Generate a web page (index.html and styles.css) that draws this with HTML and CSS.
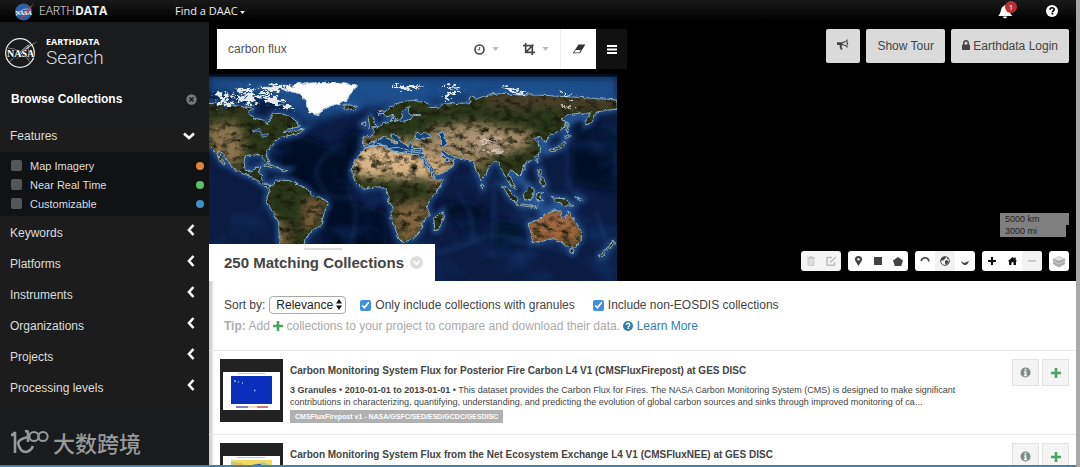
FILE: index.html
```html
<!DOCTYPE html>
<html lang="en">
<head>
  <meta charset="UTF-8">
  <meta name="viewport" content="width=device-width, initial-scale=1.0">
  <title>Earthdata Search</title>
  <link rel="stylesheet" href="styles.css">
</head>
<body>
  <!-- shared icons -->
  <svg class="defs" width="0" height="0">
    <symbol id="left" viewBox="0 0 8 12"><path d="M6.500 1 2 6l4.500 5" fill="none" stroke="currentColor" stroke-width="2.600"/></symbol>
    <symbol id="down" viewBox="0 0 12 8"><path d="M1 1.500 6 6l5-4.500" fill="none" stroke="currentColor" stroke-width="2.600"/></symbol>
    <symbol id="caret" viewBox="0 0 8 5"><path d="M0 0h8L4 5z" fill="currentColor"/></symbol>
    <symbol id="plus" viewBox="0 0 10 10"><path d="M3.700 0h2.600v3.700H10v2.600H6.300V10H3.700V6.300H0V3.700h3.700z" fill="currentColor"/></symbol>
    <symbol id="info" viewBox="0 0 12 12"><circle cx="6" cy="6" r="5.500" fill="currentColor"/><path d="M5 2h2v1.700H5zM4.300 4.700H7v3.800h.8V10H4.200V8.500H5V6h-.7z" fill="#f4f4f4"/></symbol>
    <symbol id="help" viewBox="0 0 12 12"><circle cx="6" cy="6" r="6" fill="currentColor"/><path d="M4 4.700c0-2.800 4.200-2.500 4.200-.2 0 1.400-1.800 1.300-1.800 2.900M5.500 8.700h1.800" fill="none" stroke="var(--mark)" stroke-width="1.600"/></symbol>
  </svg>

  <div class="app">
    <header class="topbar">
      <a class="brand" href="#">
        <svg width="20" height="19" viewBox="0 0 20 19"><circle cx="9.500" cy="10" r="8.500" fill="#2c5fa5"/><path d="M2 14Q9 4 17 8" fill="none" stroke="#9db8dc"/><path d="M20 1 10 11 6 17l7-5z" fill="#c8413e"/><text class="nasa" x="1.500" y="12.500" fill="#fff">NASA</text></svg>
        <span>EARTH<b>DATA</b></span>
      </a>
      <a class="daac" href="#">Find a DAAC <svg width="5" height="3"><use href="#caret"/></svg></a>
      <div class="alerts">
        <button class="plain bell" aria-label="Notifications">
          <svg width="15" height="15" viewBox="0 0 15 15"><path d="M7 1c-.7 0-.8.7-.8 1C2 3 4 8 .5 11.500V12H14v-.5C10.500 8 12 3 8 2c0-.3-.2-1-1-1zM5 12.600c0 2.400 4 2.400 4 0z" fill="#fff"/></svg>
          <span class="badge">1</span>
        </button>
        <button class="plain" aria-label="Help"><svg class="helpicon" width="12" height="12"><use href="#help"/></svg></button>
      </div>
    </header>

    <div class="main">
      <nav class="sidebar">
        <a class="logo" href="#">
          <svg width="36" height="34" viewBox="0 0 36 34"><g fill="none" stroke="#e8e8e8"><circle cx="16" cy="18" r="14.300" stroke-width="1.300"/><path d="M5 27 27 8M4 13q12 0 22 14M11 21 24 10l1 14" stroke-width=".8" opacity=".6"/></g><path d="M34 6Q19 13 12 25q9-11 22-19z" fill="#eee"/><text class="nasa-big" x="3" y="22">NASA</text></svg>
          <span><b>EARTHDATA</b><i>Search</i></span>
        </a>
        <div class="browse"><h2>Browse Collections</h2>
          <button class="plain" aria-label="Close"><svg width="11" height="11" viewBox="0 0 11 11"><circle cx="5.500" cy="5.500" r="5.200" fill="#777"/><path d="m3.500 3.500 4 4m0-4-4 4" stroke="#1b1c1d" stroke-width="1.600"/></svg></button>
        </div>
        <button class="facet"><span>Features</span><svg width="12" height="8"><use href="#down"/></svg></button>
        <div class="features">
          <label><input type="checkbox">Map Imagery<span class="dot orange"></span></label>
          <label><input type="checkbox">Near Real Time<span class="dot green"></span></label>
          <label><input type="checkbox">Customizable<span class="dot blue"></span></label>
        </div>
        <button class="facet closed"><span>Keywords</span><svg width="8" height="12"><use href="#left"/></svg></button>
        <button class="facet closed"><span>Platforms</span><svg width="8" height="12"><use href="#left"/></svg></button>
        <button class="facet closed"><span>Instruments</span><svg width="8" height="12"><use href="#left"/></svg></button>
        <button class="facet closed"><span>Organizations</span><svg width="8" height="12"><use href="#left"/></svg></button>
        <button class="facet closed"><span>Projects</span><svg width="8" height="12"><use href="#left"/></svg></button>
        <button class="facet closed"><span>Processing levels</span><svg width="8" height="12"><use href="#left"/></svg></button>
        <div class="watermark">
          <svg width="39" height="26" viewBox="0 0 39 26"><g fill="none" stroke="currentColor" stroke-width="2.600"><path d="M1 6q3 0 4-3v21M18 8Q9 10 8 14q2 9 8 9 5-1 7-6"/><path d="M15 2.500q3-1 3 1V13"/><circle cx="24" cy="7.500" r="4.600" stroke-width="2"/><circle cx="33" cy="7.500" r="4.600" stroke-width="2"/></g></svg>
          <span>大数跨境</span>
        </div>
      </nav>

      <div class="content">
        <section class="map-area">
          <div class="map-top">
            <form class="search">
              <input type="text" value="carbon flux" aria-label="Search">
              <button type="button" class="plain pick" aria-label="Temporal"><svg width="11" height="11" viewBox="0 0 11 11"><circle cx="5.500" cy="5.500" r="4.500" fill="none" stroke="#444" stroke-width="1.600"/><path d="M5.700 2.800v3H3.600" fill="none" stroke="#444"/></svg><svg class="caret" width="7" height="4"><use href="#caret"/></svg></button>
              <button type="button" class="plain pick" aria-label="Spatial"><svg width="12" height="12" viewBox="0 0 12 12"><path d="M2.700 0v9.300H12M0 2.700h9.300V12M3 9l7.500-7.500" fill="none" stroke="#444" stroke-width="1.700"/></svg><svg class="caret" width="7" height="4"><use href="#caret"/></svg></button>
              <button type="reset" class="plain clear" aria-label="Clear"><svg width="14" height="10" viewBox="0 0 14 10"><path d="M6.500.5h6.800L8 9.300H.8z" fill="#333"/><path d="M3.700 5.900h5L7.400 8.400H2.200z" fill="#fff"/></svg></button>
              <button type="button" class="plain menu" aria-label="Menu"><svg width="10" height="9" viewBox="0 0 10 9"><path d="M0 1h10M0 4.500h10M0 8h10" stroke="#fff" stroke-width="1.800"/></svg></button>
            </form>
            <div class="actions">
              <button class="btn" aria-label="Feedback"><svg width="12" height="11" viewBox="0 0 12 11"><path d="M0 3.300h5Q8.500 3 10.500 0v3.400q1.600.6 0 2.200V9Q8.500 6.500 5 6q-1 2 .7 4.200L4 11Q2.500 9 2.600 6H0z" fill="#444"/><path d="M5.800 4.100Q8 3.800 9.600 2v5Q8 5.400 5.800 5.200z" fill="#dadada"/></svg></button>
              <button class="btn">Show Tour</button>
              <button class="btn"><svg width="8" height="10" viewBox="0 0 8 10"><path d="M1.800 5V3c0-3 4.400-3 4.400 0v2" fill="none" stroke="#444" stroke-width="1.500"/><rect y="4.500" width="8" height="5.500" rx=".8" fill="#444"/></svg> Earthdata Login</button>
            </div>
          </div>

          <div class="map-row">
            <svg class="world" viewBox="0 6 1224 621" preserveAspectRatio="none" role="img" aria-label="World map">
              <defs>
                <filter id="b8" x="-30%" y="-30%" width="160%" height="160%"><feGaussianBlur stdDeviation="8"/></filter>
                <filter id="b20" x="-50%" y="-50%" width="200%" height="200%"><feGaussianBlur stdDeviation="14"/></filter>
                <filter id="rough" x="-2%" y="-2%" width="104%" height="104%" color-interpolation-filters="sRGB"><feTurbulence type="fractalNoise" baseFrequency=".07" numOctaves="3" seed="4" result="n"/><feDisplacementMap in="SourceGraphic" in2="n" scale="13" xChannelSelector="R" yChannelSelector="G"/></filter>
                <filter id="ice" x="-2%" y="-2%" width="104%" height="104%" color-interpolation-filters="sRGB"><feTurbulence type="fractalNoise" baseFrequency=".06 .1" numOctaves="3" seed="8" result="n"/><feDisplacementMap in="SourceGraphic" in2="n" scale="44" xChannelSelector="R" yChannelSelector="G"/></filter>
                <filter id="grain" x="0" y="0" width="100%" height="100%" color-interpolation-filters="sRGB"><feTurbulence type="fractalNoise" baseFrequency=".035 .06" numOctaves="4" seed="3"/><feColorMatrix values="0 0 0 0 .1  0 0 0 0 .1  0 0 0 0 .04  2.600 0 0 0 -1.150"/></filter>
                <filter id="sea" x="0" y="0" width="100%" height="100%" color-interpolation-filters="sRGB"><feTurbulence type="fractalNoise" baseFrequency=".008 .012" numOctaves="4" seed="12"/><feColorMatrix values="0 0 0 0 .09  0 0 0 0 .24  0 0 0 0 .48  2.400 0 0 0 -1.150"/></filter>
                <g id="shapes">
                  <path d="M-9 94 60 97l45 8 28 3-15 16 12 14 34 6 12 15 9-20 5-15 25 0 26 9 25 17 6 14-37 8-13 10 24-4 40-7-14 12-32 8-25 5-20 15-20 25-3 15 8 22-8-3-10-17-22-7-30 5-5 15 3 25 22 8 15-15 11 0-8 18 13 4-3 20 13 12 17 2-12 9-20-15-25-18-35-14-25-13-16-24-14-22-17-7 27 42-12-4-24-38-20-18z"/>
                  <path d="m184 342 15-17 50 0 18 13 28 12 12 20 43 15 8 13-12 22-10 40-33 20-16 30-25 70h-50l-3-130-20-32-18-35 8-20z"/>
                  <path d="m460 226 2-31 28-2 6-13-6-10 25-10 14-10 19-2-2-14 6 0 3 12 25 2 20-4 9-12 28-3-37-4-4-10 8-10-12 1-11 12-4 18-13 10-12-17-20 5-10-10 24-20 30-14 38-5 45 10 5 12 28-2 9-9 80-3 5-18 9-1 7 10 40-15 43-5 40 5 60 0 85 5 85 5 69 5v27l-44 6-18 3-17 32-15 8 2-17 14-20-32 0-42 6-15 14 13 6-4 16-17 12-28 15-10 20-8-6-10-10-16 4 10 14 5 18-5 17-16 13-20 9-10 15-4 20-10 6-15-15-10 0-5 10 11 20 14 25-19-13-16-30-10-20-5-17-15-5-20 20-10 25-10 12-15-27-10-30-15-5-35-5-20-7-20-14-5 5 20 20 20 0-5 22-30 20-20 6-15-24-31-48-40-3-30-8-30 4-30-20-20 2z"/>
                  <path d="m465 229 18-7 48-2 10 15 29 6 58 8 22 31 26 41 30 1-16 28-25 30-10 20 5 30-20 22-5 25-20 23-35 12-10-12-15-40-10-20 5-30-10-25-5-25-10-15-30 0-30 7-25-22-12-25 4-25 18-30z"/>
                  <path d="m675 440 25-23 3 18-13 37-13 4zM478 134l8-4 15 31-22 7 5-14zM458 153l11-4 2 11-12 2zM400 103l15-5 30 5-8 9-25 0z"/>
                  <path d="m165 275 35 8 18 9-20-3-34-9zM212 293l24 0-10 6z"/>
                  <g transform="translate(603)">
                    <path d="m354 455 36-14 20-18 22-9 24 6-5 12 14 9 10-27 11 22 14 20 15 23-2 27-18 20-25-4-14-12-26-10-30 7-35 5 0-22zM480 530l14 1-6 14-8-4zM610 508l3 9-20 16-22 24-4-6 24-20z"/>
                    <path d="m278 342 14 6 32 35-5 8-18-11zM322 394l42 6 20 2-1 5-60-7zM340 368l21-25 12 14-6 24-22 3zM380 365l22-3-14 10 12 14-15-4-3 8zM383 293l10 0 0 18 14 24-4 10-14-10 2-18zM424 373l20 6 22 1 24 22-26 0-24-10zM418 234l28-10 19-18 2 6-16 18-30 9zM460 195l13-9 6 7-14 7zM468 150l6 5-2 26-5 1zM334 285l12-2-4 11zM380 264l5-5-2 15zM216 334l6 9-4 7-4-7zM495 378l22 3-5 6z"/>
                  </g>
                </g>
                <mask id="land" maskUnits="userSpaceOnUse" x="0" y="0" width="1224" height="640"><use href="#shapes" fill="#fff"/></mask>
              </defs>
              <rect y="6" width="1224" height="621" fill="#0a1c42"/>
              <g filter="url(#b20)">
                <path d="M0 15h1224v70L800 75 450 110 300 150 200 80 0 60z" fill="#1d508d"/>
                <path d="M190 240q70-80 150-20 60 10 100-60 30 80-20 150l10 80 100 30 10 200H300l60-130-70-70-90-90z" fill="#030b25"/>
                <path d="M680 400l100-20 60 40-60 70zM1090 160h130v200l-130-30z" fill="#030b25"/>
                <path d="M850 450h90l-10 90-80-20z" fill="#06122e"/>
              </g>
              <rect y="6" width="1224" height="621" filter="url(#sea)" opacity=".5"/>
              <g filter="url(#b8)" fill="none" stroke="#2b5c9e">
                <use href="#shapes" stroke-width="16" opacity=".8"/>
                <path d="M380 230q-80 50-50 100 20 60 100 45 20 60-5 150M745 360q50 60 45 140M855 330v180M690 540q90-20 160-55l250 60M1073 180l5 160 50 50M1160 420l30 80 0 90" stroke-width="8" opacity=".35"/>
                <path d="M905 290l55 60 40 70 80-30M1000 210l20 40M1075 155q35-30 65-20" stroke-width="25" opacity=".8"/>
              </g>
              <g filter="url(#rough)">
                <use href="#shapes" fill="#2b3819"/>
                <g mask="url(#land)">
                  <g filter="url(#b20)">
                    <path d="M-20 80H300v35H-20z" fill="#33301c"/>
                    <path d="M0 155l90-5 20 80-30 60-80-50z" fill="#8b7450"/>
                    <path d="M430 205H640l50 110-75 8-190-10z" fill="#d9b488"/>
                    <path d="M640 230h60l50 50-70 50-45-70z" fill="#cda77b"/>
                    <path d="M665 165l120-15 190 30-20 50-100 20-70 30-130-30z" fill="#a58c69"/>
                    <path d="M780 190l90-5 20 55-80 5z" fill="#b59e84"/>
                    <path d="M780 250h50l-5 60-20-10z" fill="#817548"/>
                    <path d="M830 60h400v50H830z" fill="#4b412b"/>
                    <path d="M290 380l60 0-30 90-40 5zM210 445l30 20 0 90-30 0z" fill="#7e6040"/>
                    <path d="M550 400l110-20-10 100-80 40z" fill="#80633f"/>
                    <path d="M660 330l40-10-20 60z" fill="#8b6845"/>
                    <path d="M950 410h165v105H950z" fill="#a0673f"/>
                  </g>
                  <path d="M190 425l15 20 10 70" stroke="#c5aa98" stroke-width="7" fill="none" filter="url(#b8)"/>
                  <rect y="60" width="1224" height="500" filter="url(#grain)"/>
                </g>
                <!-- inland seas -->
                <g fill="#164174" stroke="#8eb4cf" stroke-width="3">
                  <path d="m466 229 23-5 11-18 30-12 10 6 16 16 8-2-20-24 14-2 27 28 14 10 4-18 10 22 30-2-1 16-45-6-25 4-40-12-16-14z"/>
                  <path d="m614 192 12-12 12 6 12-5 18 14-26 4-22 5zM690 184l14-4 3 12 8 24-10 6-10-10zM637 254l8 4 33 56-4 6zM696 251l8-1 20 19-12 0z"/>
                  <path d="m130 176 22-4 10 12-20-4zM155 190l20-5 5 5-20 6z" stroke-width="2"/>
                </g>
                <use href="#shapes" fill="none" stroke="#8fb1c0" stroke-width="3"/>
                <path d="M220 49l40-14 90-4 95 8-24 31-6 15-30 12-38 10-18 21-26-5-10-22-5-20-16-16-36-7z" fill="#fff" stroke="#bcd0dc" stroke-width="3"/>
              </g>
              <g filter="url(#ice)" fill="#e4e9ec" stroke="#315b83" stroke-width="3">
                <path d="m5 65 45-5 25 12-40 12zM75 50l40-10 25 12-35 12zM10 90l50-5 20 12-45 8zM85 72l45-8 30 14-40 16-38-7zM145 48l50-12 55 3-28 14-50 10zM160 72l45-2 20 25-20 12-30-15zM215 90l25 5 14 17-20 4zM105 95l25 0 5 12-20 0z"/>
                <path d="M150 66h35l-15 9zM540 44l40-5 60 5-45 10zM700 70l38-14 25 2-30 10-22 16zM690 43l50-3 18 6-45 2zM870 42l45 8 45 18-50-6zM1050 64l50 5-20 5z" stroke="none"/>
              </g>
              <g fill="#ddd6cb" opacity=".75" filter="url(#ice)"><path d="M800 210l35-8 25 5-20 6zM820 235l50-2 20 10-40 0zM860 195l20 5-8 5zM1060 100l30 5 15 8-38-5zM500 112l20 8-5 9z"/></g>
              <rect x="0" y="6" width="1224" height="8" fill="#030814" opacity=".8"/>
            </svg>

            <div class="map-tools">
              <div class="scale"><span class="km">5000 km</span><span class="mi">3000 mi</span></div>
              <div class="tools">
                <div class="group off">
                  <button aria-label="Delete"><svg width="8" height="10" viewBox="0 0 8 10"><path d="M0 1.500h8M2.500.5h3M1 2.500h6v7H1z" stroke="#c9c9c9" fill="#ddd"/></svg></button>
                  <button aria-label="Edit"><svg width="11" height="10" viewBox="0 0 11 10"><path d="M6 1.500H1v7.700h7.500V6M4 6.500 10 1" stroke="#bbb" stroke-width="1.400" fill="none"/></svg></button>
                </div>
                <div class="group">
                  <button aria-label="Point"><svg width="7" height="10" viewBox="0 0 7 10"><path d="M3.500 0C-.8 0-.6 4 1 6l2.500 4L6 6c1.600-2 1.800-6-2.500-6z" fill="#444"/><circle cx="3.500" cy="3.300" r="1.200" fill="#fff"/></svg></button>
                  <button aria-label="Rectangle"><svg width="8" height="8"><rect width="8" height="8" fill="#444"/></svg></button>
                  <button aria-label="Polygon"><svg width="10" height="9" viewBox="0 0 10 9"><path d="M5 0l5 3.600L8.200 9H1.800L0 3.600z" fill="#444"/></svg></button>
                </div>
                <div class="group">
                  <button aria-label="North Polar"><svg width="10" height="10" viewBox="0 0 10 10"><path d="M1 5Q2 1.500 5.500 1.700 8.500 2 9 5.500" fill="none" stroke="#444" stroke-width="1.600"/></svg></button>
                  <button class="selected" aria-label="Equirectangular"><svg width="10" height="10" viewBox="0 0 10 10"><circle cx="5" cy="5" r="4.400" fill="#eee" stroke="#555"/><path d="M1 3l2-2 3 0-1 2-2 1.500L1 4.500zM5 5l2-1 2 2-3 3-1-2zM7 1l2 2H7z" fill="#444"/></svg></button>
                  <button aria-label="South Polar"><svg width="10" height="10" viewBox="0 0 10 10"><path d="M1 5l3 2 5-2Q7.500 9.300 5 9 2.300 9 1 5z" fill="#444"/></svg></button>
                </div>
                <div class="group dark">
                  <button aria-label="Zoom in"><svg width="8" height="8"><use href="#plus"/></svg></button>
                  <button aria-label="Home"><svg width="9" height="8" viewBox="0 0 9 8"><path d="M0 4 4.500 0l1.800 1.500V.5h1.500v2.400L9 4 8 4.500V8H5.500V5.300h-2V8H1V4.500z" fill="#111"/></svg></button>
                  <button class="selected" aria-label="Zoom out"><svg width="8" height="3"><rect width="8" height="2" fill="#ccc"/></svg></button>
                </div>
                <div class="group">
                  <button aria-label="Layers"><svg width="14" height="14" viewBox="0 0 14 14"><path d="M1 4.500 7 2l6 2.500V10l-6 3.500L1 10z" fill="#aaa"/><path d="M1 4.500 7 2l6 2.500L7 7z" fill="#ddd"/><path d="M1 7.200 7 10l6-2.800" fill="none" stroke="#ccc"/></svg></button>
                </div>
              </div>
            </div>
          </div>
          <div class="tab"><span class="handle"></span>
            <h1>250 Matching Collections</h1>
            <button class="plain" aria-label="Collapse"><svg width="13" height="13" viewBox="0 0 13 13"><circle cx="6.500" cy="6.500" r="6.500" fill="#ddd"/><path d="m3.500 5 3 3.200 3-3.200" stroke="#fff" stroke-width="1.800" fill="none"/></svg></button>
          </div>
        </section>

        <section class="results">
          <div class="filters">
            <label for="sort">Sort by:</label>
            <span class="select"><select id="sort"><option>Relevance</option></select><svg width="6" height="11" viewBox="0 0 6 11"><path d="M0 4.500 3 0l3 4.500zM0 6.500h6L3 11z" fill="#111"/></svg></span>
            <label class="check"><input type="checkbox" checked>Only include collections with granules</label>
            <label class="check"><input type="checkbox" checked>Include non-EOSDIS collections</label>
          </div>
          <p class="tip"><b>Tip:</b> Add <svg class="add" width="10" height="10"><use href="#plus"/></svg> collections to your project to compare and download their data. <a href="#"><svg width="10" height="10" viewBox="0 0 12 12"><use href="#help"/></svg> Learn More</a></p>

          <article class="item">
            <div class="thumb"><svg width="57" height="38" viewBox="0 0 57 38"><rect width="57" height="38" fill="#fff"/><path d="M15 1.500h27" stroke="#aaa" stroke-width=".7"/><rect x="8" y="4" width="41" height="28" fill="#0a2fbd"/><path d="M11 9h2m2 1h1m3 1h1M31 18.500h1.500" stroke="#8ac4f5" stroke-width="1.300"/><path d="M13 35h12" stroke="#35459e" stroke-width="1.300"/><path d="M25 35h9" stroke="#e9cf80" stroke-width="1.300"/><path d="M34 35h11" stroke="#a83632" stroke-width="1.300"/></svg></div>
            <div class="info">
              <h3>Carbon Monitoring System Flux for Posterior Fire Carbon L4 V1 (CMSFluxFirepost) at GES DISC</h3>
              <p><b>3 Granules • 2010-01-01 to 2013-01-01</b> • This dataset provides the Carbon Flux for Fires. The NASA Carbon Monitoring System (CMS) is designed to make significant contributions in characterizing, quantifying, understanding, and predicting the evolution of global carbon sources and sinks through improved monitoring of ca...</p>
              <span class="tag">CMSFluxFirepost v1 - NASA/GSFC/SED/ESD/GCDC/GESDISC</span>
            </div>
            <div class="item-actions">
              <button aria-label="Collection details"><svg width="11" height="11"><use href="#info"/></svg></button>
              <button class="add" aria-label="Add collection"><svg width="10" height="10"><use href="#plus"/></svg></button>
            </div>
          </article>
          <article class="item">
            <div class="thumb"><svg width="57" height="38" viewBox="0 0 57 38"><rect width="57" height="38" fill="#fff"/><path d="M14 1.500h28" stroke="#aaa" stroke-width=".7"/><rect x="8" y="4" width="41" height="28" fill="#f2da62"/><path d="M8 6l10 1 6 4 8-3 8-2 9 4v22H8z" fill="#a9cfa0"/><path d="M28 9l9-1 5 3-12 2z" fill="#1747ad"/><path d="M10 7l9 0 3 5-9-2z" fill="#f1b74c"/></svg></div>
            <div class="info">
              <h3>Carbon Monitoring System Flux from the Net Ecosystem Exchange L4 V1 (CMSFluxNEE) at GES DISC</h3>
            </div>
            <div class="item-actions">
              <button aria-label="Collection details"><svg width="11" height="11"><use href="#info"/></svg></button>
              <button class="add" aria-label="Add collection"><svg width="10" height="10"><use href="#plus"/></svg></button>
            </div>
          </article>
        </section>
      </div>
    </div>
  </div>
</body>
</html>
```
FILE: styles.css
```css
* { box-sizing: border-box; }
body { margin: 0; height: 100vh; overflow: hidden; font: 12px/16px "Liberation Sans", Arial, sans-serif; color: #444; background: #a9a9a9; padding-right: 4px; }
h1, h2, h3, p { margin: 0; }
a { color: inherit; text-decoration: none; }
button, input, select { font: inherit; color: inherit; }
button { cursor: pointer; border: 0; padding: 0; }
svg { flex: none; }
use { --mark: #fff; }
.defs { position: absolute; }
.plain { background: none; display: flex; align-items: center; justify-content: center; }
.app { height: 100vh; display: flex; flex-direction: column; border-bottom: 2px solid #4a7ea8; }

/* top bar */
.topbar { flex: none; height: 22px; display: flex; align-items: center; padding: 0 18px 0 14px; background: linear-gradient(#191919, #000); color: #eee; font-family: "Open Sans", sans-serif; }
.brand { display: flex; align-items: center; gap: 5px; width: 161px; font-size: 12px; font-weight: 300; line-height: 20px; }
.brand b { font-weight: 700; }
.nasa { font: bold 6px "Liberation Serif", serif; }
.daac { font-size: 11px; }
.daac svg { vertical-align: middle; }
.alerts { margin-left: auto; display: flex; align-items: center; gap: 33px; }
.bell { position: relative; }
.badge { position: absolute; top: -3px; right: -4px; width: 12px; height: 12px; border-radius: 50%; background: #b5312f; color: #fff; font-size: 8px; line-height: 12px; text-align: center; }
.helpicon { color: #fff; }
.helpicon use { --mark: #000; }

/* sidebar */
.main { flex: 1; min-height: 0; display: flex; }
.sidebar { flex: none; width: 209px; background: #191b1d; color: #ddd; display: flex; flex-direction: column; }
.logo { display: flex; align-items: center; gap: 6px; padding: 10px 4px 0; height: 50px; }
.logo span { display: flex; flex-direction: column; font-family: "Open Sans", sans-serif; }
.logo b { font-size: 9px; line-height: 12px; color: #fff; }
.logo i { font: 300 19px/20px Roboto, sans-serif; }
.nasa-big { font: bold 10px "Liberation Serif", serif; fill: #fff; stroke: #191b1d; stroke-width: 1px; paint-order: stroke; }
.browse { display: flex; align-items: center; justify-content: space-between; height: 54px; padding: 0 12px 0 11px; }
.browse h2 { font-size: 12px; color: #fff; }
.facet { flex: none; display: flex; align-items: center; justify-content: space-between; height: 31px; padding: 0 14px 0 10px; background: #1c1c1c; color: #ddd; }
.browse + .facet { height: 26px; padding-bottom: 6px; }
.facet svg { color: #fff; }
.facet.closed svg { margin-bottom: 5px; }
.features { background: #111214; padding: 4px 5px 3px 11px; font-size: 11px; }
.features label { display: flex; align-items: center; height: 19px; }
.features input { appearance: none; width: 11px; height: 11px; margin: 0 8px 0 0; border-radius: 2px; background: #555658; }
.dot { width: 8px; height: 8px; border-radius: 50%; margin-left: auto; }
.orange { background: #e2823c; }
.green { background: #5ac46b; }
.blue { background: #3f8fc8; }
.features + .facet { height: 32px; padding-top: 1px; }
.watermark { margin-top: auto; display: flex; align-items: center; gap: 4px; height: 42px; padding: 0 10px 4px; color: #97999b; font: 500 22px/26px "Noto Sans CJK SC", sans-serif; }

/* map */
.content { flex: 1; min-width: 0; display: flex; flex-direction: column; background: #fff; }
.map-area { flex: none; position: relative; background: #000; padding-top: 7px; }
.map-top { display: flex; justify-content: space-between; padding: 0 7px 0 8px; }
.search { display: flex; height: 40px; width: 410px; background: #fff; }
.search input { flex: 1; min-width: 0; border: 0; padding: 0 11px; background: none; outline: 0; color: #555; }
.pick { width: 49px; gap: 7px; }
.pick .caret { color: #bbb; }
.clear { width: 36px; border-left: 1px solid #eee; }
.menu { width: 31px; background: #111; }
.actions { display: flex; gap: 6px; }
.btn { height: 34px; padding: 0 11px; background: #dadada; border-radius: 2px; color: #444; }
.map-row { display: flex; margin-top: 5px; }
.world { width: 408px; height: 207px; display: block; }
.map-tools { flex: 1; display: flex; flex-direction: column; justify-content: flex-end; align-items: flex-end; gap: 14px; padding: 0 7px 10px 0; }
.scale { width: 69px; display: flex; flex-direction: column; font-size: 9px; line-height: 12px; color: #222; }
.scale span { background: #808080; padding-left: 5px; }
.mi { margin-right: 3px; }
.tools { display: flex; gap: 7px; }
.group { display: flex; border-radius: 3px; overflow: hidden; background: #fff; }
.group button { width: 20px; height: 20px; background: none; display: flex; align-items: center; justify-content: center; }
.group .selected { background: #f2f2f2; }
.off { background: #f4f4f4; }
.dark { color: #111; }
.tab { position: absolute; left: 0; bottom: 0; height: 37px; padding: 0 12px 0 15px; display: flex; align-items: center; gap: 6px; background: #fff; }
.tab h1 { font-size: 15px; }
.handle { position: absolute; top: 4px; left: 95px; width: 38px; height: 2px; background: #ddd; }

/* results */
.results { flex: 1; min-height: 0; overflow: hidden; padding-top: 14px; background: linear-gradient(90deg, #c8c8c8, #ddd 3px, #fff 5px); }
.filters { display: flex; align-items: center; height: 20px; padding-left: 15px; }
.select { position: relative; margin: 0 14px 0 4px; }
.select select { appearance: none; display: block; width: 77px; height: 18px; padding: 0 6px; border: 1px solid #aaa; border-radius: 4px; background: #fff; color: #222; }
.select svg { position: absolute; right: 4px; top: 3px; pointer-events: none; }
.check { display: flex; align-items: center; margin-right: 18px; }
.check input { width: 11px; height: 11px; margin: 0 4px 0 0; accent-color: #3f8fe0; }
.tip { padding: 3px 15px 16px; color: #aaa; }
.tip svg { vertical-align: -1px; }
.tip a { color: #2f7fae; }
.add { color: #4aa564; }
.item { display: flex; height: 84px; padding: 8px 7px 0 11px; border-top: 1px solid #e8e8e8; }
.thumb { flex: none; width: 63px; height: 63px; background: #222; display: flex; align-items: center; justify-content: center; }
.info { flex: 1; padding: 6px 46px 0 7px; font-size: 9px; line-height: 12px; }
.info h3 { font-size: 10px; line-height: 12px; margin-bottom: 7px; }
.tag { display: inline-block; margin-top: 2px; padding: 0 5px; background: #b0b0b0; color: #fff; font-size: 7px; line-height: 13px; font-weight: bold; }
.item-actions { display: flex; gap: 3px; }
.item-actions button { width: 27px; height: 27px; background: #f4f4f4; border: 1px solid #e2e2e2; color: #7f8b88; display: flex; align-items: center; justify-content: center; }
.item-actions .add { color: #4aa564; }
```
